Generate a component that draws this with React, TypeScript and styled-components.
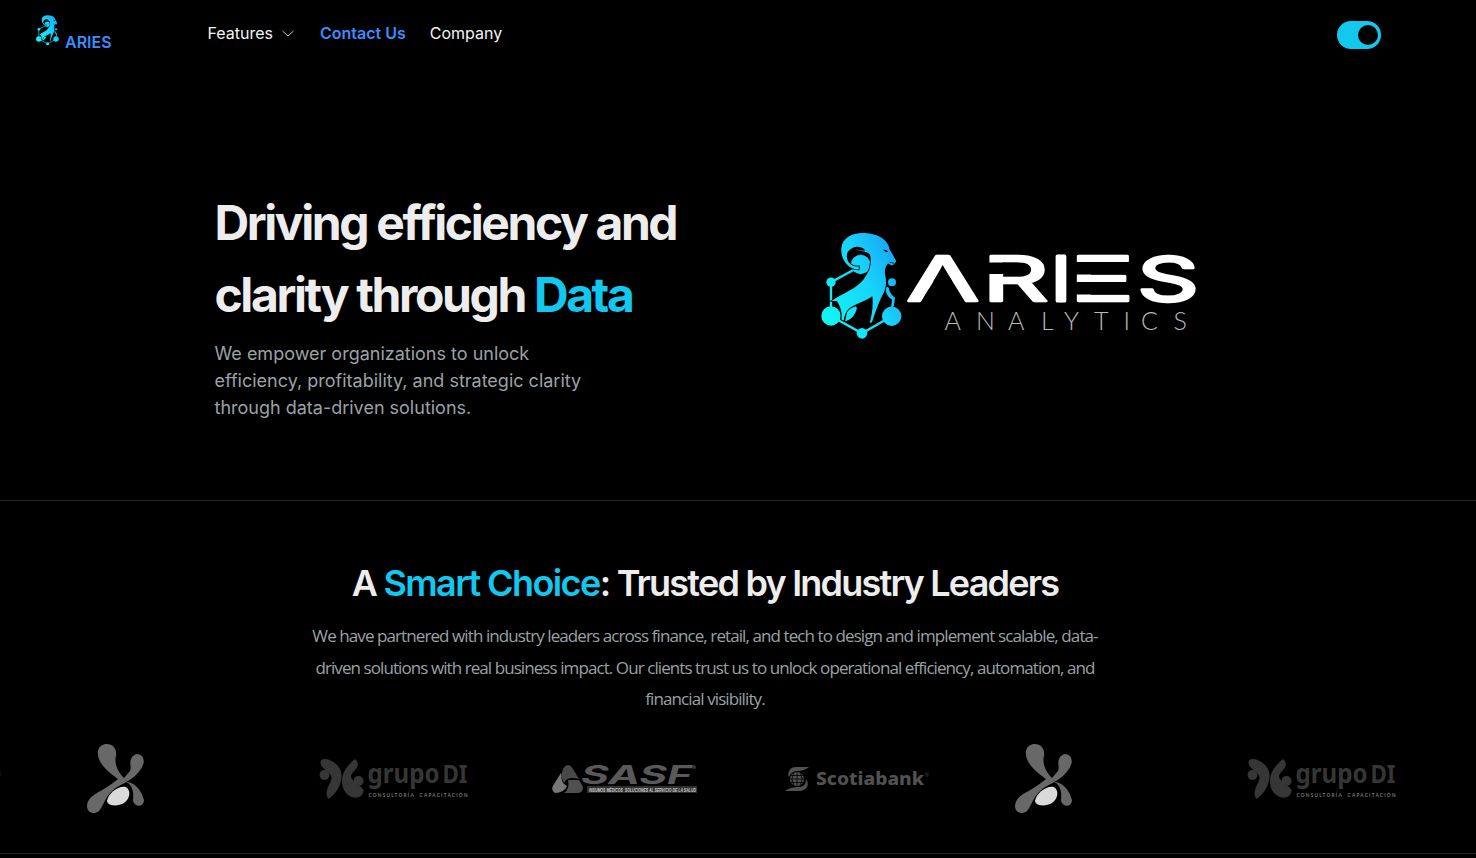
import React from 'react';
import styled, { createGlobalStyle } from 'styled-components';

const Global = createGlobalStyle`
  * { box-sizing: border-box; }
  html, body { margin: 0; background: #000; overflow: hidden; }
  body { font-family: Inter, 'Liberation Sans', sans-serif; color: #ededed; }
  h1, h2, p { margin: 0; }
  svg { display: block; flex: none; }
`;

const Page = styled.div`
  width: 100%;
  height: 858px;
  overflow: hidden;
  background: #000;
`;

const NavBar = styled.nav`
  display: flex;
  height: 70px;
  padding-left: 35.5px;
`;

const Brand = styled.a`
  display: flex;
  width: 172px;
  padding-top: 14.5px;
  gap: 6.5px;
  color: #3b8cff;
  font-size: 16px;
  line-height: 24px;
  font-weight: 600;
`;

const BrandName = styled.span`
  padding-top: 15.5px;
`;

const NavLinks = styled.div`
  display: flex;
  flex: 1;
  gap: 24px;
  padding-top: 21px;
`;

const NavLink = styled.a<{ $active?: boolean }>`
  display: flex;
  align-items: center;
  gap: 8px;
  height: 24px;
  font-size: 16px;
  line-height: 24px;
  white-space: nowrap;
  color: ${(p) => (p.$active ? '#3b8cff' : '#f3f3f3')};
  font-weight: ${(p) => (p.$active ? 600 : 400)};
`;

const Toggle = styled.button`
  display: flex;
  justify-content: flex-end;
  align-items: center;
  width: 44px;
  height: 28px;
  margin: 21px 95px 0 0;
  padding: 0 3px;
  border: 0;
  border-radius: 14px;
  background: #12c8ee;
`;

const Knob = styled.span`
  width: 20px;
  height: 20px;
  border-radius: 50%;
  background: #000;
`;

const Hero = styled.section`
  display: flex;
  height: 431px;
  padding: 117px 0 0 214.5px;
  border-bottom: 1px solid #262626;
`;

const HeroCopy = styled.div`
  width: 603.5px;
`;

const Title = styled.h1`
  font-size: 48px;
  line-height: 72px;
  font-weight: 700;
  letter-spacing: -2.4px;
  white-space: nowrap;
`;

const Accent = styled.span`
  color: #12c8ee;
`;

const Lead = styled.p`
  margin-top: 9px;
  width: 400px;
  color: #9aa2a7;
  font-size: 18px;
  line-height: 27px;
  white-space: nowrap;
`;

const HeroLogo = styled.div`
  padding-top: 43px;
`;

const LogoRow = styled.div`
  display: flex;
  align-items: flex-start;
  padding: 2px 0 0 3px;

  svg + svg {
    margin: 18px 0 0 -2px;
  }
`;

const Trusted = styled.section`
  height: 353px;
  padding-top: 55px;
  border-bottom: 1px solid #262626;
  overflow: hidden;
`;

const TrustedCopy = styled.div`
  width: 1410px;
  text-align: center;
`;

const SubTitle = styled.h2`
  font-size: 36px;
  line-height: 54px;
  font-weight: 600;
  letter-spacing: -1.78px;

  ${Accent} {
    letter-spacing: -1.6px;
  }
`;

const Line = styled.span<{ $spacing: number }>`
  display: block;
  letter-spacing: ${(p) => p.$spacing}px;
`;

const Summary = styled.p`
  margin-top: 10.4px;
  color: #9aa2a7;
  font-family: 'Open Sans', 'Noto Sans', sans-serif;
  font-weight: 400;
  font-size: 17px;
  line-height: 31.5px;
`;

const Marquee = styled.div`
  display: grid;
  grid-template-columns: repeat(7, 232px);
  align-items: start;
  margin: 26.1px 0 0 -145px;
`;

const Goat = ({ width, height, id }: { width: number; height: number; id: string }) => (
  <svg width={width} height={height} viewBox="33 36 243 320" preserveAspectRatio="none">
    <defs>
      <linearGradient id={id} gradientUnits="userSpaceOnUse" x1="50" y1="270" x2="290" y2="150">
        <stop offset="0" stopColor="#10f4f4" />
        <stop offset=".55" stopColor="#18d4fa" />
        <stop offset="1" stopColor="#18a4f6" />
      </linearGradient>
    </defs>
    <g fill={`url(#${id})`}>
      <circle cx="152" cy="133" r="29" />
      <path
        d="M63 287V186L144 142M63 287L156 339L245 288"
        fill="none"
        stroke={`url(#${id})`}
        strokeWidth="7"
      />
      <circle cx="63" cy="186" r="14" />
      <circle cx="246" cy="186" r="12" />
      <circle cx="63" cy="287" r="29" />
      <circle cx="245" cy="288" r="29" />
      <circle cx="156" cy="339" r="16" />
      <path d="M229 199L236 202Q239 222 255 232L252 257L243 263L246 238Q231 230 227 211Z" />
      <path
        stroke="#000"
        strokeWidth="5"
        paintOrder="stroke"
        d="M146 148C116 149 91 119 94 84C97 52 130 37 164 39C204 41 234 58 239 88L258 121Q260 126 255 128Q252 135 245 136L234 130Q223 142 225 162C231 184 229 207 216 228C207 244 196 276 186 306L179 308C186 282 190 258 187 228C157 247 135 252 119 263C105 276 104 288 101 301L94 298C98 278 91 258 81 242L65 242C99 217 138 208 161 177C184 146 185 126 180 104C170 91 146 95 137 87Q151 93 166 91C153 75 125 77 112 98C106 121 120 141 147 139Z"
      />
      <path d="M137 258Q118 264 111 277L105 303Q134 295 141 263Z" />
    </g>
    <path d="M220 90Q229 87 234 95Q224 97 220 90" fill="#000" />
    <path d="M239 127L252 129" stroke="#000" strokeWidth="2" />
  </svg>
);

const wordmarkLetters = [
  { char: 'A', x: 906.6, stretch: 1.7 },
  { char: 'R', x: 982.6, stretch: 1.66 },
  { char: 'I', x: 1051, stretch: 1.2 },
  { char: 'E', x: 1069.5, stretch: 1.74 },
  { char: 'S', x: 1137, stretch: 1.56 },
];

const Wordmark = () => (
  <svg width="300" height="90" viewBox="900 250 300 90">
    {wordmarkLetters.map(({ char, x, stretch }) => (
      <text
        key={char}
        transform={`translate(${x} 301) scale(${stretch} 1)`}
        fontFamily="Inter, sans-serif"
        fontWeight="400"
        fontSize="62"
        fill="#fff"
        stroke="#fff"
        strokeWidth="3.4"
        strokeLinejoin="round"
        vectorEffect="non-scaling-stroke"
      >
        {char}
      </text>
    ))}
    {/* open counters of the stencil-style A, R and E */}
    <path d="M943 266L919 305H967ZM986 262.5H1004V274H986ZM1074 262H1134V274.5H1074ZM1074 282H1134V294.5H1074Z" fill="#000" />
    <text
      x="944.5 976 1008 1041 1064 1094 1123.5 1141 1173.5"
      y="330"
      fontFamily="Lato, sans-serif"
      fontWeight="300"
      fontSize="25"
      fill="#b9b9b9"
    >
      ANALYTICS
    </text>
  </svg>
);

const FigureLogo = () => (
  <svg width="60" height="76" viewBox="87 741 60 76">
    <g fill="#686868">
      <path d="M98 755C97 747 102 744 107 744C113 744 117 749 116 756C114 764 118 772 124 778L130 771C132 767 129 764 131 759C132 756 135 754 138 754C143 755 145 760 143 765C139 775 129 781 119 786C105 794 105 804 99 811C94 815 87 813 87 806C88 795 99 793 107 787C112 784 115 781 118 779C108 772 99 764 98 755Z" />
      <path d="M126 782C134 782 141 789 144 800C144 807 135 808 133 801C134 793 133 785 126 782Z" />
    </g>
    <path d="M107 801C108 793 119 785 126 787C132 791 129 800 124 803C119 806 108 807 107 801Z" fill="#dadada" />
  </svg>
);

const GrupoLogo = () => (
  <svg width="152" height="50" viewBox="319.5 754 152 50">
    <g fill="#363636">
      <path d="M321 762C322 758 327 759 330 760C337 763 342 768 342 776C342 786 336 794 329 799C324 792 330 786 332 779C333 771 320 770 321 762Z" />
      <circle cx="325" cy="775" r="5" />
      <path d="M356 759C361 766 357 768 353 773C347 780 361 784 364 790C364 797 357 799 352 797C344 793 341 785 343 776C345 769 350 763 356 759Z" />
      <circle cx="359" cy="781" r="5" />
      <text x="368" y="783" fontFamily="'Noto Sans', sans-serif" fontSize="26" fontWeight="700" textLength="72" lengthAdjust="spacingAndGlyphs">grupo</text>
      <text x="443" y="783" fontFamily="'Noto Sans', sans-serif" fontSize="25" fontWeight="700" textLength="25" lengthAdjust="spacingAndGlyphs">DI</text>
    </g>
    <text x="369" y="797" fontFamily="Lato, sans-serif" fontSize="4.7" fontWeight="700" fill="#777" textLength="99" xmlSpace="preserve">CONSULTORÍA  CAPACITACIÓN</text>
  </svg>
);

const SasfLogo = () => (
  <svg width="150" height="40" viewBox="551 759 150 40">
    <path d="M563 769Q568 761 573 769L579 779Q567 776 564 783L561 776Z" fill="#484848" />
    <path d="M561 773Q561 784 567 786Q564 793 555 793Q550 790 554 784Z" fill="#777" />
    <path d="M568 780H579L583 787Q583 793 577 793H564Q570 789 568 780Z" fill="#505050" />
    <text x="581" y="783.5" fontFamily="Inter, sans-serif" fontSize="25.5" fontWeight="700" fontStyle="italic" fill="#595959" textLength="111" lengthAdjust="spacingAndGlyphs">SASF</text>
    <circle cx="694" cy="767" r="2" fill="#333" />
    <rect x="587" y="786" width="110" height="7" fill="#303030" />
    <text x="589" y="791.8" fontFamily="'Liberation Sans', sans-serif" fontSize="5.3" fontWeight="700" fontStyle="italic" fill="#d0d0d0" textLength="107" lengthAdjust="spacingAndGlyphs">INSUMOS MÉDICOS&nbsp; SOLUCIONES AL SERVICIO DE LA SALUD</text>
  </svg>
);

const ScotiaLogo = () => (
  <svg width="150" height="30" viewBox="783 764 150 30">
    <g fill="#515151">
      <path d="M809 767H796C790 767 787 772 789 777Q792 770 798 771Q804 771 809 767Z" />
      <path d="M785 791H799C807 791 810 784 806 779Q806 787 799 787Q790 787 785 791Z" />
      <circle cx="797" cy="779" r="7" />
      <text x="816" y="785" fontFamily="'Noto Sans', sans-serif" fontSize="18.5" fontWeight="800" textLength="108" lengthAdjust="spacingAndGlyphs">Scotiabank</text>
      <text x="924.5" y="777" fontFamily="'Liberation Sans', sans-serif" fontSize="6">®</text>
    </g>
    <path d="M797 772V786M790 779H804M791 775.5H803M791 782.5H803M794 773Q790 779 794 785M800 773Q804 779 800 785" stroke="#000" strokeWidth=".8" fill="none" />
  </svg>
);

const Slot = styled.div<{ $top: number }>`
  padding-top: ${(p) => p.$top}px;
`;

const clients = [
  { Logo: ScotiaLogo, top: 23 },
  { Logo: FigureLogo, top: 0 },
  { Logo: GrupoLogo, top: 13 },
  { Logo: SasfLogo, top: 18 },
  { Logo: ScotiaLogo, top: 23 },
  { Logo: FigureLogo, top: 0 },
  { Logo: GrupoLogo, top: 13 },
];

export default function App() {
  return (
    <Page>
      <Global />
      <NavBar>
        <Brand>
          <Goat width={23} height={30.5} id="brandGoat" />
          <BrandName>ARIES</BrandName>
        </Brand>
        <NavLinks>
          <NavLink>
            Features
            <svg width="15" height="14" viewBox="0 0 15 14" fill="none" stroke="#ccc">
              <path d="M1.5 5L7 10L12.5 5" />
            </svg>
          </NavLink>
          <NavLink $active>Contact Us</NavLink>
          <NavLink>Company</NavLink>
        </NavLinks>
        <Toggle aria-label="Toggle theme">
          <Knob />
        </Toggle>
      </NavBar>
      <Hero>
        <HeroCopy>
          <Title>
            Driving efficiency and
            <br />
            clarity through <Accent>Data</Accent>
          </Title>
          <Lead>
            We empower organizations to unlock
            <br />
            efficiency, profitability, and strategic clarity
            <br />
            through data-driven solutions.
          </Lead>
        </HeroCopy>
        <HeroLogo>
          <LogoRow>
            <Goat width={81} height={107} id="heroGoat" />
            <Wordmark />
          </LogoRow>
        </HeroLogo>
      </Hero>
      <Trusted>
        <TrustedCopy>
          <SubTitle>
            A <Accent>Smart Choice</Accent>: Trusted by Industry Leaders
          </SubTitle>
          <Summary>
            <Line $spacing={-0.91}>
              We have partnered with industry leaders across finance, retail, and tech to design and implement scalable, data-
            </Line>
            <Line $spacing={-0.92}>
              driven solutions with real business impact. Our clients trust us to unlock operational efficiency, automation, and
            </Line>
            <Line $spacing={-0.9}>financial visibility.</Line>
          </Summary>
        </TrustedCopy>
        <Marquee>
          {clients.map(({ Logo, top }, i) => (
            <Slot key={i} $top={top}>
              <Logo />
            </Slot>
          ))}
        </Marquee>
      </Trusted>
    </Page>
  );
}
